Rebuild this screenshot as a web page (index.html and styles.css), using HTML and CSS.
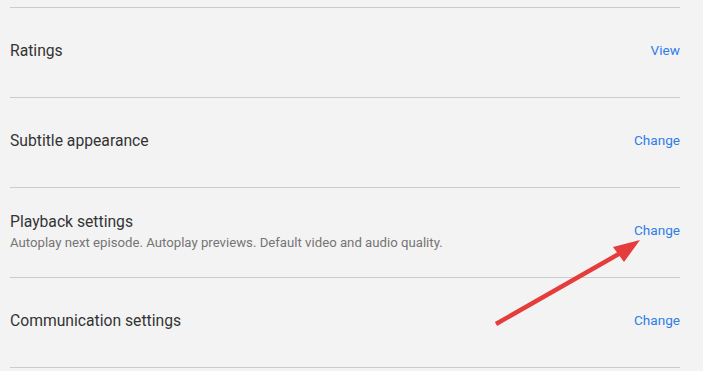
FILE: index.html
```html
<!DOCTYPE html>
<html lang="en">
<head>
    <meta charset="UTF-8">
    <meta name="viewport" content="width=device-width, initial-scale=1.0">
    <title>Account Settings</title>
    <link rel="stylesheet" href="styles.css">
</head>
<body>
    <div class="settings">
        <div class="setting-row">
            <div class="setting-info">
                <div class="setting-title">Ratings</div>
            </div>
            <a href="#" class="setting-link">View</a>
        </div>
        <div class="setting-row">
            <div class="setting-info">
                <div class="setting-title">Subtitle appearance</div>
            </div>
            <a href="#" class="setting-link">Change</a>
        </div>
        <div class="setting-row">
            <div class="setting-info">
                <div class="setting-title">Playback settings</div>
                <div class="setting-desc">Autoplay next episode. Autoplay previews. Default video and audio quality.</div>
            </div>
            <a href="#" class="setting-link">Change</a>
        </div>
        <div class="setting-row">
            <div class="setting-info">
                <div class="setting-title">Communication settings</div>
            </div>
            <a href="#" class="setting-link">Change</a>
        </div>

        <!-- annotation arrow pointing at the playback link -->
        <svg class="arrow" width="703" height="371" viewBox="0 0 703 371">
            <line x1="496" y1="324" x2="624" y2="251" stroke="#e53c3c" stroke-width="4.5"/>
            <polygon points="640,240 613,247 624,262" fill="#e53c3c"/>
        </svg>
    </div>
</body>
</html>
```

FILE: styles.css
```css
body {
    margin: 0;
    padding: 0;
    background-color: #f3f3f3;
    font-family: Roboto, Arial, sans-serif;
    overflow: hidden;
}

.settings {
    width: 670px;
    margin: 7px 0 0 10px;
    border-top: 1px solid #cccccc;
}

.setting-row {
    display: flex;
    align-items: center;
    justify-content: space-between;
    height: 85px;
    padding-bottom: 4px;
    border-bottom: 1px solid #cccccc;
}

.setting-title {
    font-size: 15.7px;
    color: #333333;
}

.setting-desc {
    margin-top: 4px;
    font-size: 13.2px;
    color: #757575;
}

.setting-link {
    margin-bottom: 2px;
    font-size: 13.6px;
    color: #2f7de9;
    text-decoration: none;
}

.arrow {
    position: absolute;
    left: 0;
    top: 0;
    pointer-events: none;
}
```
